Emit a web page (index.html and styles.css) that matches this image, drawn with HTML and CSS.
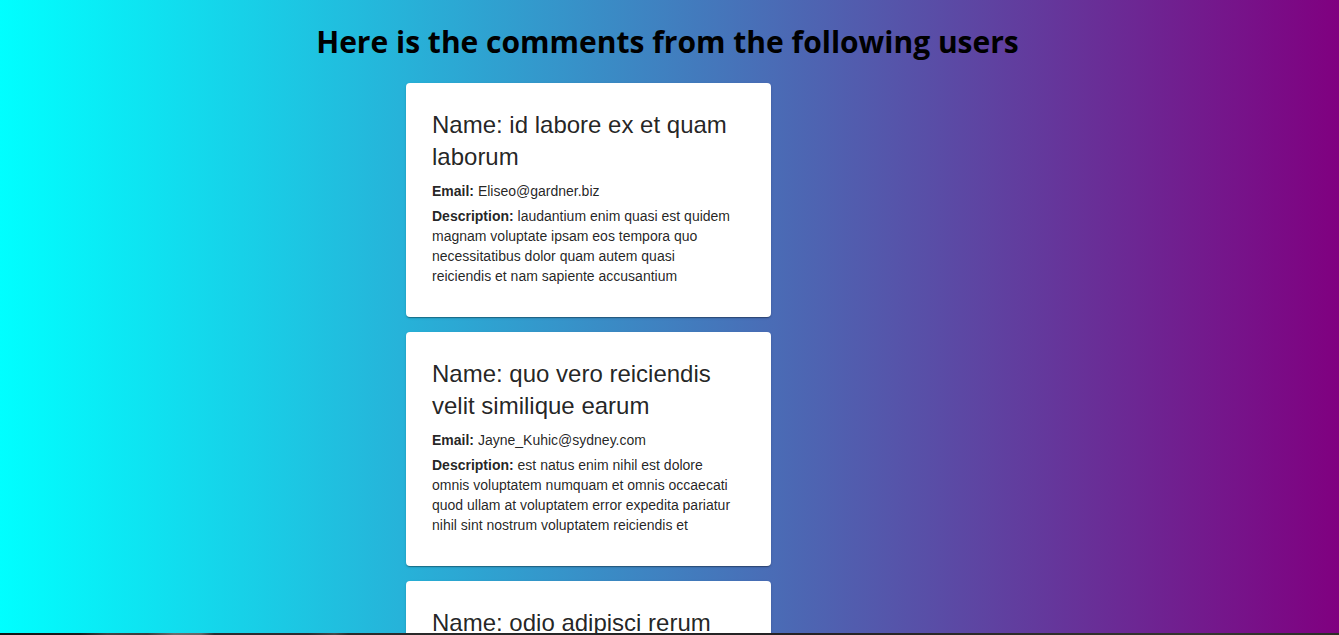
FILE: index.html
```
<!DOCTYPE html>
<html lang="en">
<head>
<meta charset="utf-8">
<meta name="viewport" content="width=device-width, initial-scale=1">
<title>Comments</title>
<link rel="stylesheet" href="styles.css">
</head>
<body>
<main class="page">
<h1 class="title">Here is the comments from the following users</h1>
<section class="comments">
<article class="card">
<h2 class="name">Name: id labore ex et quam laborum</h2>
<p class="detail"><b>Email:</b> Eliseo@gardner.biz</p>
<p class="detail"><b>Description:</b> laudantium enim quasi est quidem magnam voluptate ipsam eos tempora quo necessitatibus dolor quam autem quasi reiciendis et nam sapiente accusantium</p>
</article>
<article class="card">
<h2 class="name">Name: quo vero reiciendis velit similique earum</h2>
<p class="detail"><b>Email:</b> Jayne_Kuhic@sydney.com</p>
<p class="detail"><b>Description:</b> est natus enim nihil est dolore omnis voluptatem numquam et omnis occaecati quod ullam at voluptatem error expedita pariatur nihil sint nostrum voluptatem reiciendis et</p>
</article>
<article class="card">
<h2 class="name">Name: odio adipisci rerum</h2>
</article>
</section>
</main>
<div class="edge"></div>
</body>
</html>
```
FILE: styles.css
```
* { box-sizing: border-box; }
body {
  display: flex;
  flex-direction: column;
  height: 100vh;
  margin: 0;
}
.page {
  flex: 1;
  min-height: 0;
  overflow: hidden;
  background: linear-gradient(to right, cyan, purple);
}
.edge {
  flex: none;
  height: 2px;
  background: linear-gradient(to right, #141414 0%, #1c1c1c 6%, #444 8%, #3c3c3c 11%, #6c6c6c 13%, #666 15%, #2c2c30 16%, #2c2c30 23%, #484848 25%, #2b2b2b 26%, #242224 60%, #35362f 90%, #2c2d26 100%);
}
.title {
  margin: 20px 0 19px;
  padding-right: 4px;
  font: 700 30px/44px "Open Sans", "Noto Sans", sans-serif;
  text-align: center;
  color: #000;
}
.comments {
  display: grid;
  grid-template-columns: minmax(0, 365px);
  gap: 15px;
  max-width: 527px;
  margin: 0 auto;
}
.card {
  padding: 26px 36px 26px 26px;
  background: #fff;
  border-radius: 4px;
  box-shadow: 0 2px 1px -1px rgba(0, 0, 0, .2), 0 1px 1px rgba(0, 0, 0, .14), 0 1px 3px rgba(0, 0, 0, .12);
  color: rgba(0, 0, 0, .87);
  font: 14px/20px "Liberation Sans", Arial, sans-serif;
}
.name {
  margin: 0 0 8px;
  font-size: 24px;
  font-weight: 400;
  line-height: 32px;
}
.detail { margin: 0 0 5px; }
```
